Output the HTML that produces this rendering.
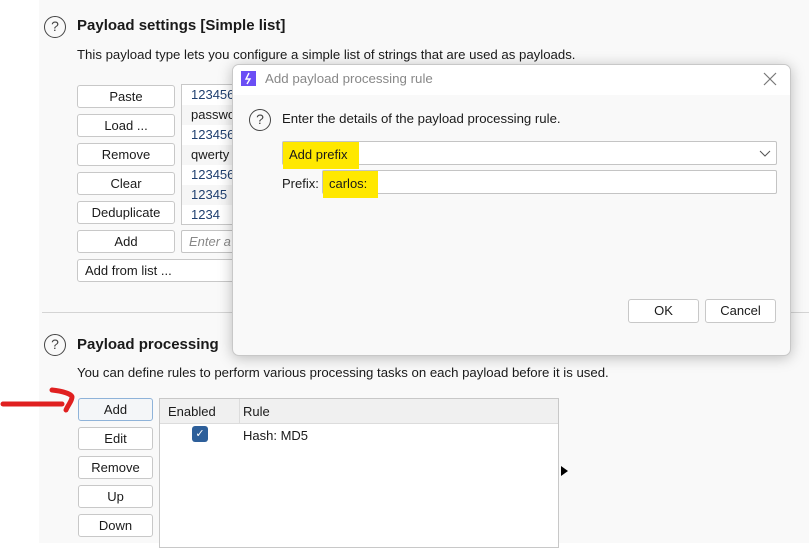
<!DOCTYPE html>
<html><head><meta charset="utf-8"><style>
*{box-sizing:border-box;margin:0;padding:0}
body{width:809px;height:543px;overflow:hidden;background:#fff;font-family:"Liberation Sans",sans-serif;font-size:13px;color:#1a1a1a;position:relative}
.panel{position:absolute;left:39px;top:0;width:770px;height:543px;background:#f9f9f9}
.a{position:absolute}
.help{position:absolute;width:22px;height:22px;border:1.6px solid #444;border-radius:50%;font-size:14px;line-height:19px;text-align:center;color:#444}
.h{font-weight:bold;font-size:15px}
.btn{position:absolute;background:#fff;border:1px solid #c8c8c8;border-radius:3px;text-align:center;line-height:21px;font-size:13px}
.list{position:absolute;left:181px;top:84px;width:60px;height:141px;border:1px solid #c8c8c8;background:#fff;overflow:hidden}
.list div{height:20px;line-height:20px;padding-left:9px;white-space:nowrap}
.list div:nth-child(even){background:#f6f6f6}
.n{color:#1f3f6f}
.dlg{position:absolute;left:232px;top:64px;width:559px;height:292px;background:#f9f9f9;border:1px solid #c8c8c8;border-radius:7px;box-shadow:0 2px 14px rgba(0,0,0,.25);overflow:hidden}
.tb{position:absolute;left:0;top:0;right:0;height:30px;background:#fff}
.in{position:absolute;background:#fff;border:1px solid #c4c4c4;border-radius:2px}
.hl{background:#ffe800}
</style></head><body>
<div class="panel"></div>
<div class="help" style="left:44px;top:16px">?</div>
<div class="a h" style="left:77px;top:17px">Payload settings [Simple list]</div>
<div class="a" style="left:77px;top:47px;font-size:13.2px">This payload type lets you configure a simple list of strings that are used as payloads.</div>
<div class="btn" style="left:77px;top:85px;width:98px;height:23px">Paste</div>
<div class="btn" style="left:77px;top:114px;width:98px;height:23px">Load ...</div>
<div class="btn" style="left:77px;top:143px;width:98px;height:23px">Remove</div>
<div class="btn" style="left:77px;top:172px;width:98px;height:23px">Clear</div>
<div class="btn" style="left:77px;top:201px;width:98px;height:23px">Deduplicate</div>
<div class="btn" style="left:77px;top:230px;width:98px;height:23px">Add</div>
<div class="btn" style="left:77px;top:259px;width:170px;height:23px;text-align:left;padding-left:7px">Add from list ...</div>
<div class="list"><div class="n">123456</div><div>password</div><div class="n">123456</div><div>qwerty</div><div class="n">123456</div><div class="n">12345</div><div class="n">1234</div></div>
<div class="in" style="left:181px;top:230px;width:60px;height:23px;padding-left:7px;line-height:21px;color:#888;font-style:italic">Enter a</div>
<div class="a" style="left:42px;top:312px;width:767px;height:1px;background:#d4d4d4"></div>
<div class="help" style="left:44px;top:334px">?</div>
<div class="a h" style="left:77px;top:336px">Payload processing</div>
<div class="a" style="left:77px;top:365px;font-size:13.2px">You can define rules to perform various processing tasks on each payload before it is used.</div>
<div class="btn" style="left:78px;top:398px;width:75px;height:23px;border-color:#8fb3d9;background:#f4f6f8">Add</div>
<div class="btn" style="left:78px;top:427px;width:75px;height:23px">Edit</div>
<div class="btn" style="left:78px;top:456px;width:75px;height:23px">Remove</div>
<div class="btn" style="left:78px;top:485px;width:75px;height:23px">Up</div>
<div class="btn" style="left:78px;top:514px;width:75px;height:23px">Down</div>
<div class="a" style="left:159px;top:398px;width:400px;height:150px;border:1px solid #c8c8c8;background:#fff">
 <div class="a" style="left:0;top:0;width:398px;height:25px;background:#f0f0f0;border-bottom:1px solid #dcdcdc"></div>
 <div class="a" style="left:79px;top:0;width:1px;height:25px;background:#dcdcdc"></div>
 <div class="a" style="left:8px;top:5px">Enabled</div>
 <div class="a" style="left:83px;top:5px">Rule</div>
 <div class="a" style="left:32px;top:27px;width:16px;height:16px;background:#2d5f9a;border-radius:3px;color:#fff;font-size:11px;line-height:16px;text-align:center">✓</div>
 <div class="a" style="left:83px;top:29px">Hash: MD5</div>
</div>
<svg class="a" style="left:560px;top:465px" width="10" height="12"><path d="M1 1 L8 6 L1 11Z" fill="#000"/></svg>
<svg class="a" style="left:0;top:385px" width="80" height="35"><path d="M3 19 L62 19" stroke="#e02020" stroke-width="5" stroke-linecap="round"/><path d="M52 5 C62 6 72 9 72 12 C72 16 68 20 66 25" stroke="#e02020" stroke-width="5" fill="none" stroke-linecap="round"/></svg>
<div class="dlg">
 <div class="tb"></div>
 <svg class="a" style="left:8px;top:6px" width="15" height="15"><rect width="15" height="15" fill="#6b4ef5"/><path d="M8 2 L5 8 L9 8 L6 13" stroke="#fff" stroke-width="1.4" fill="none"/></svg>
 <div class="a" style="left:32px;top:6px;color:#888;font-size:13.3px">Add payload processing rule</div>
 <svg class="a" style="left:530px;top:7px" width="14" height="14"><path d="M1 1L13 13M13 1L1 13" stroke="#777" stroke-width="1.2"/></svg>
 <div class="help" style="left:16px;top:44px">?</div>
 <div class="a" style="left:49px;top:46px;font-size:13.2px">Enter the details of the payload processing rule.</div>
 <div class="in" style="left:49px;top:76px;width:495px;height:24px"></div>
 <div class="a hl" style="left:50px;top:77px;width:76px;height:27px;padding:5px 0 0 6px">Add prefix</div>
 <svg class="a" style="left:526px;top:85px" width="12" height="8"><path d="M1 1L6 6L11 1" stroke="#555" fill="none"/></svg>
 <div class="a" style="left:49px;top:111px">Prefix:</div>
 <div class="in" style="left:89px;top:105px;width:455px;height:24px"></div>
 <div class="a hl" style="left:90px;top:106px;width:55px;height:27px;padding:5px 0 0 6px">carlos:</div>
 <div class="btn" style="left:395px;top:234px;width:71px;height:24px">OK</div>
 <div class="btn" style="left:472px;top:234px;width:71px;height:24px">Cancel</div>
</div>
</body></html>
